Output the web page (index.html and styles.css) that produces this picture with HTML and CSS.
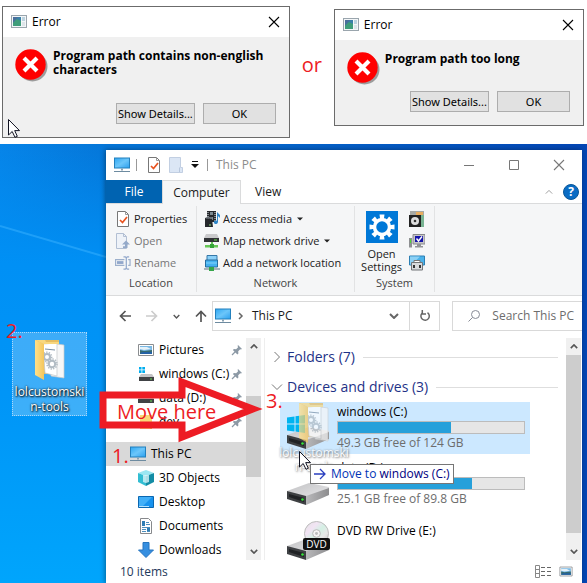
FILE: index.html
```html
<!DOCTYPE html>
<html lang="en">
<head>
<meta charset="utf-8">
<title>Install help</title>
<link rel="stylesheet" href="styles.css">
</head>
<body>
<svg class="defs" aria-hidden="true">
  <defs>
    <linearGradient id="gScreen" x1="0" y1="0" x2="1" y2="1"><stop offset="0" stop-color="#2ea7f2"/><stop offset=".5" stop-color="#6cc6fa"/><stop offset="1" stop-color="#2b9fee"/></linearGradient>
    <linearGradient id="gTop" x1="0" y1="0" x2="1" y2="1"><stop offset="0" stop-color="#c2c2c4"/><stop offset="1" stop-color="#e8e8ea"/></linearGradient>
    <linearGradient id="gSide" x1="0" y1="0" x2="1" y2="0"><stop offset="0" stop-color="#b9b9bb"/><stop offset="1" stop-color="#8d8d8f"/></linearGradient>
    <linearGradient id="gFold" x1="0" y1="0" x2="1" y2="0"><stop offset="0" stop-color="#ffe08a"/><stop offset="1" stop-color="#f4c65c"/></linearGradient>
    <linearGradient id="gDisc" x1="0" y1="0" x2="1" y2="1"><stop offset="0" stop-color="#e2e2e2"/><stop offset=".3" stop-color="#f2e4f4"/><stop offset=".5" stop-color="#d4f0e4"/><stop offset=".7" stop-color="#e8e8e8"/><stop offset="1" stop-color="#bdbdbd"/></linearGradient>
  </defs>
  <symbol id="app" viewBox="0 0 16 14"><rect x=".5" y=".5" width="15" height="12" fill="#f3f6f8" stroke="#9aa5ad"/><rect x="2" y="2" width="8" height="9" fill="#3a7fa8"/><path d="M2 11V7l4-3 4 2v5z" fill="#3f9d7a"/><path d="M2 2h5L2 8z" fill="#4a6f9c"/><rect x="11" y="2" width="3" height="4" fill="#bcd3df"/><rect x="11" y="7" width="3" height="4" fill="#dde5e9"/></symbol>
  <symbol id="error" viewBox="0 0 33 33"><circle cx="17.500" cy="17.500" r="15" fill="#9c9c9c"/><circle cx="15.500" cy="15.500" r="15.200" fill="#f00"/><path d="M9 9l13 13M22 9L9 22" stroke="#fff" stroke-width="4.200"/></symbol>
  <symbol id="cursor" viewBox="0 0 12 19"><path d="M.5 .5V16l3.700-3.500L7 18.300l2.300-1L6.700 11.600h4.800z" fill="#fff" stroke="#111322"/></symbol>
  <symbol id="close" viewBox="0 0 12 12"><path d="M1 1l10 10M11 1L1 11" fill="none" stroke="currentColor" stroke-width="1.100"/></symbol>
  <symbol id="pc" viewBox="0 0 16 16"><rect x=".5" y="1" width="15" height="10" fill="url(#gScreen)" stroke="#2380bd"/><path d="M7 11.500h2v2H7z" fill="#8aa2b3"/><path d="M0 14.500h16" stroke="#6d8ba0"/></symbol>
  <symbol id="check" viewBox="0 0 14 16"><path d="M1.500.5h8l3 3v12h-11z" fill="#fff" stroke="#777"/><path d="M9.500.5v3h3" fill="none" stroke="#999"/><path d="M4 9l2.500 2.500L11 6" fill="none" stroke="#e8531f" stroke-width="1.700"/></symbol>
  <symbol id="newdoc" viewBox="0 0 14 16"><path d="M.5.5h11v10h2v5H.500z" fill="#dbe6f5" stroke="#c2cfe2"/><path d="M10.500 15V10.500" stroke="#b7c6dc"/></symbol>
  <symbol id="open" viewBox="0 0 16 16"><path d="M1.500.5h7l3 3v12h-10z" fill="#eef2f8" stroke="#b2bfd3"/><path d="M8.500.5v3h3" fill="none" stroke="#b2bfd3"/><path d="M11 7.500l4 4h-2.500V15H8v-1.800h2v-1.700H7z" fill="#94a9c9"/></symbol>
  <symbol id="rename" viewBox="0 0 17 16"><path d="M10 4.500H.5v6H10M14 4.500h2v6h-2" fill="none" stroke="#9db0cc" stroke-width="1.300"/><rect x="2" y="6" width="7" height="3" fill="#91a7cb"/><path d="M9 1.500h2l1 1 1-1h2M12 2v12M9 14.500h2l1-1 1 1h2" fill="none" stroke="#91a7cb" stroke-width="1.300"/></symbol>
  <symbol id="media" viewBox="0 0 16 16"><rect x="3" y="0" width="9" height="11" fill="#26282c"/><path d="M4 1v10M11 1v10" stroke="#dce6ec" stroke-dasharray="1 1"/><path d="M6 1h3v3H6zM6 6h3v3H6z" fill="#7d8a92"/><path d="M13 1v9c-1-1-4 0-3 2s4 1 4-1V5l2 2V4z" fill="#2f86c8"/><path d="M1 7l7 1 1 8H1z" fill="#24272b"/><path d="M1 7l2-1h5v2z" fill="#686e75"/><path d="M5 14h2" stroke="#8ee07d"/></symbol>
  <symbol id="mapdrive" viewBox="0 0 16 14"><path d="M2 0h11l2 4H0z" fill="#c9c9cb"/><rect y="4" width="15" height="4" fill="#303235"/><path d="M10 6h3" stroke="#66dd4f"/><path d="M7 8h2v3H7z" fill="#69c65a"/><path d="M1 11h13v2.500H1z" fill="#67c757"/><path d="M6 10h4v4H6z" fill="#35a338"/></symbol>
  <symbol id="netloc" viewBox="0 0 16 16"><path d="M3 .5h10V6H3z" fill="#8bd0f8" stroke="#3678a8"/><path d="M1.500 5h12v7h-12z" fill="#43b1ef" stroke="#266b9d"/><path d="M2 8h11" stroke="#83d2fb"/><path d="M0 14h16" stroke="#a6b3b8" stroke-width="2"/><path d="M5 12h5v4H5z" fill="#36a64b"/></symbol>
  <symbol id="gear" viewBox="0 0 32 32"><path fill="#0078d7" d="M0 0h32v32H0z"/><g fill="#fff"><g id="teeth"><path d="M13.500 3.500h5l-.7 5h-3.600zM13.500 28.500h5l-.7-5h-3.600z"/></g><use href="#teeth" transform="rotate(45 16 16)"/><use href="#teeth" transform="rotate(90 16 16)"/><use href="#teeth" transform="rotate(135 16 16)"/></g><circle cx="16" cy="16" r="7.500" fill="none" stroke="#fff" stroke-width="3.500"/></symbol>
  <symbol id="programs" viewBox="0 0 16 16"><path fill="#a7a9a5" d="M1 0h14v5H1z"/><path fill="#e9ae60" d="M7 1h7v3H7z"/><path fill="#78b392" d="M12 4h3v12h-3z"/><path fill="#222" d="M0 4h12v12H0z"/><circle cx="6" cy="10" r="4" fill="#dedede"/><circle cx="6" cy="10" r="1.300" fill="#333"/></symbol>
  <symbol id="sysprops" viewBox="0 0 16 14"><path fill="#c5c5c7" d="M4 .5h12V10H4z" stroke="#88898c"/><path fill="#1414aa" d="M6 2h8v6H6z"/><path d="M7.500 4.500L9.500 7 13 2.500" fill="none" stroke="#fff" stroke-width="1.400"/><path fill="#929396" d="M8 10h4v2H8zM6 12h8v1.500H6z"/><path fill="#8e9092" d="M0 4h3v9.500H0z"/><path fill="#4edc34" d="M1 5h1v4H1z"/></symbol>
  <symbol id="manage" viewBox="0 0 16 16"><path fill="#4ab2ea" stroke="#2c7fb3" d="M.5 1h15v9H.500z"/><path fill="#8bd0f5" d="M1 1.500h10L3 9.500H1z"/><path fill="#d9dadc" stroke="#737578" d="M2.500 7.500h11V15h-11z"/><path fill="#fff" d="M5 5.500h6v2H5z" stroke="#777"/><path fill="#333" d="M4 10h2v3H4zM10 10h2v3h-2z"/></symbol>
  <symbol id="chevdown" viewBox="0 0 10 6"><path d="M1 1l4 4 4-4" fill="none" stroke="currentColor" stroke-width="2"/></symbol>
  <symbol id="thin" viewBox="0 0 12 8"><path d="M1 1.500l5 5 5-5" fill="none" stroke="currentColor"/></symbol>
  <symbol id="arrow" viewBox="0 0 12 12"><path d="M12 6H1.500M6.500 1l-5 5 5 5" fill="none" stroke="currentColor" stroke-width="1.700"/></symbol>
  <symbol id="caret" viewBox="0 0 6 4"><path d="M0 .5h6L3 3.500z" fill="#222"/></symbol>
  <symbol id="pin" viewBox="0 0 12 12"><path d="M7 1l4 4-1.200.6-.6-.4-2 2.100.2 2.200-1 1L1.900 6l1-1 2.200.2 2-2L6.600 2z" fill="#8c99a5"/><path d="M4.500 7.500L1 11" stroke="#8c99a5" stroke-width="1.200"/></symbol>
  <symbol id="picture" viewBox="0 0 16 16"><path fill="#fff" stroke="#8a8d90" d="M.5 2.500h15v11H.500z"/><path fill="#79b8e4" d="M2 4h12v8H2z"/><path fill="#e4f1f9" d="M2 5h7l4 2-7 1-4-1z"/><path fill="#376b70" d="M2 8l4 1 8-1v4H2z"/><path fill="#2461a6" d="M4 10h10v2H2z"/></symbol>
  <symbol id="windrive" viewBox="0 0 16 16"><path fill="#00adef" d="M1 1h2.500v2.500H1zM4.300 1H7v2.500H4.300zM1 4.300h2.500V7H1zM4.300 4.300H7V7H4.300z"/><path fill="#c4c4c6" d="M3 8h11l2 3H1z"/><path fill="#404245" d="M1 11h15v4H1z"/><path fill="#65dd55" d="M12 12.500h2v1h-2z"/></symbol>
  <symbol id="smalldrive" viewBox="0 0 16 16"><path fill="#c4c4c6" d="M3 5h10l3 4H0z"/><path fill="#404245" d="M0 9h16v4H0z"/><path fill="#65dd55" d="M12 10.500h2v1h-2z"/></symbol>
  <symbol id="smallfolder" viewBox="0 0 16 16"><path fill="#f9d978" d="M2 1h12v14H2z"/><path fill="#edc458" d="M12 8h2v7h-2z"/></symbol>
  <symbol id="cube" viewBox="0 0 16 16"><path fill="#9be7f2" d="M8 0l8 3-8 3-8-3z"/><path fill="#32bdd2" d="M0 3l8 3v10l-8-4z"/><path fill="#138ca5" d="M16 3L8 6v10l8-4z"/><path fill="#e3f8fb" d="M5 5l6 0v7l-3 1-3-1z" opacity=".75"/></symbol>
  <symbol id="desk" viewBox="0 0 16 16"><path fill="#1792ee" stroke="#0a67b1" d="M.5 2.500h15v11H.500z"/><path fill="#41aff8" d="M1 3h13L5 12H1z"/><path stroke="#b7e3ff" d="M1 12.500h10"/></symbol>
  <symbol id="docs" viewBox="0 0 16 16"><path fill="#fff" stroke="#87898c" d="M2.500.5h8l3 3v12h-11z"/><path stroke="#4d8fbe" d="M8 4.500h3M8 6.500h4M4 9.500h8M4 11.500h4M4 13.500h4M9 13.500h3"/><path fill="#307eb5" d="M4 3h3v5H4zM9 10h3v3H9z"/></symbol>
  <symbol id="down" viewBox="0 0 16 16"><path fill="#368fe0" stroke="#2675bf" d="M5 .5h6V8h4.500L8 15.500.5 8H5z"/></symbol>
  <symbol id="folder" viewBox="0 0 32 43">
    <path fill="#e6bd61" d="M1 2h24v34H6z"/><path fill="#f7f7f7" stroke="#c9c9c9" stroke-width=".7" d="M16 5l14 2v33l-13-2z"/><path fill="#fff" stroke="#c2c6c9" stroke-width=".7" d="M9 6l14-1v33l-12-3z"/>
    <path stroke="#55718b" stroke-width=".8" d="M11 11l10 1" fill="none"/><g fill="none" stroke="#b1bbc3" stroke-width="2"><circle cx="13" cy="19" r="3"/><circle cx="18" cy="26" r="3.200"/></g><g fill="none" stroke="#b1bbc3" stroke-dasharray="1.300 1.300" stroke-width="1.500"><circle cx="13" cy="19" r="4.700"/><circle cx="18" cy="26" r="5"/></g>
    <path fill="url(#gFold)" d="M1 2l9 4v36l-9-5z"/><path fill="#f8d77f" d="M1 2h10l1 2h13v2H10z"/></symbol>
  <symbol id="drive" viewBox="0 0 43 22"><path fill="url(#gTop)" d="M0 8L22 0l20 4v8L19 16z"/><path fill="url(#gSide)" d="M19 13l23-8v7L19 22z"/><path fill="#3e4043" d="M0 8l19 5v9L0 16z"/><path fill="#202225" d="M2 11l15 4v4L2 14z"/><circle cx="15.500" cy="16.500" r="1.300" fill="#38e83c"/></symbol>
  <symbol id="winlogo" viewBox="0 0 18 18"><path fill="#00b4f0" d="M0 2.500L7.500 1.500V8.500H0zM8.500 1.300L18 0v8.500H8.500zM0 9.500h7.500v7L0 15.500zM8.500 9.500H18V18l-9.500-1.400z"/></symbol>
  <symbol id="disc" viewBox="0 0 26 26"><circle cx="13" cy="13" r="12.500" fill="url(#gDisc)" stroke="#b9b9b9"/><circle cx="13" cy="13" r="4" fill="#f5f5f5" stroke="#b5b5b5"/><circle cx="13" cy="13" r="1.500" fill="#bbb"/></symbol>
</svg>

<header class="errors">
  <section class="dialog dialog-first">
    <div class="dialog-title"><svg class="app"><use href="#app"/></svg><span>Error</span><button class="plain" aria-label="Close"><svg class="x"><use href="#close"/></svg></button></div>
    <div class="dialog-body">
      <svg class="err"><use href="#error"/></svg><p>Program path contains non-english characters</p>
    </div>
    <div class="dialog-actions"><button>Show Details...</button><button>OK</button></div>
    <svg class="cursor dialog-cursor"><use href="#cursor"/></svg>
  </section>
  <span class="or hand">or</span>
  <section class="dialog dialog-second">
    <div class="dialog-title"><svg class="app"><use href="#app"/></svg><span>Error</span><button class="plain" aria-label="Close"><svg class="x"><use href="#close"/></svg></button></div>
    <div class="dialog-body">
      <svg class="err"><use href="#error"/></svg><p>Program path too long</p>
    </div>
    <div class="dialog-actions"><button>Show Details...</button><button>OK</button></div>
  </section>
</header>

<main class="desktop">
  <svg class="beam" viewBox="0 0 106 34" aria-hidden="true"><path d="M0 2l106 31" stroke="#36b0ff" stroke-width="2" opacity=".55"/></svg>
  <div class="shortcut"><svg class="folder"><use href="#folder"/></svg><span>lolcustomski<br>n-tools</span></div>

  <section class="window">
    <div class="titlebar">
      <svg class="i16"><use href="#pc"/></svg><i class="bar"></i><svg class="i14"><use href="#check"/></svg><svg class="i14"><use href="#newdoc"/></svg>
      <svg class="qat" viewBox="0 0 8 8"><path d="M1 .5h6" stroke="#111"/><path d="M0 3h8L4 7z" fill="#111"/></svg><i class="bar"></i><span class="caption">This PC</span>
      <div class="controls">
        <button class="plain" aria-label="Minimize"><svg viewBox="0 0 12 12"><path d="M1 6.500h10" stroke="#777"/></svg></button>
        <button class="plain" aria-label="Maximize"><svg viewBox="0 0 12 12"><path d="M1.500 1.500h9v9h-9z" fill="none" stroke="#777"/></svg></button>
        <button class="plain" aria-label="Close"><svg><use href="#close"/></svg></button>
      </div>
    </div>
    <nav class="tabs">
      <button class="tab file">File</button><button class="tab active">Computer</button><button class="tab">View</button>
      <div class="tabs-end"><button class="plain" aria-label="Collapse ribbon"><svg class="collapse" viewBox="0 0 10 6"><path d="M1 5l4-4 4 4" fill="none" stroke="#888"/></svg></button><button class="help" aria-label="Help">?</button></div>
    </nav>
    <div class="ribbon">
      <div class="group location">
        <div class="cmds">
          <button><svg><use href="#check"/></svg>Properties</button>
          <button disabled><svg><use href="#open"/></svg>Open</button>
          <button disabled><svg><use href="#rename"/></svg>Rename</button>
        </div>
        <div class="label">Location</div>
      </div>
      <div class="group network">
        <div class="cmds">
          <button><svg><use href="#media"/></svg>Access media<svg class="caret"><use href="#caret"/></svg></button>
          <button><svg><use href="#mapdrive"/></svg>Map network drive<svg class="caret"><use href="#caret"/></svg></button>
          <button><svg><use href="#netloc"/></svg>Add a network location</button>
        </div>
        <div class="label">Network</div>
      </div>
      <div class="group system">
        <div class="syscmds">
          <button class="settings"><svg><use href="#gear"/></svg>Open<br>Settings</button>
          <div class="minis">
            <button class="plain" aria-label="Uninstall or change a program"><svg><use href="#programs"/></svg></button>
            <button class="plain" aria-label="System properties"><svg><use href="#sysprops"/></svg></button>
            <button class="plain" aria-label="Manage"><svg><use href="#manage"/></svg></button>
          </div>
        </div>
        <div class="label">System</div>
      </div>
    </div>
    <div class="address">
      <div class="history">
        <button class="plain" aria-label="Back"><svg class="arr"><use href="#arrow"/></svg></button>
        <button class="plain faded" aria-label="Forward"><svg class="arr flip"><use href="#arrow"/></svg></button>
        <button class="plain recent" aria-label="Recent locations"><svg><use href="#chevdown"/></svg></button>
        <button class="plain" aria-label="Up"><svg class="arr up"><use href="#arrow"/></svg></button>
      </div>
      <div class="path"><svg class="i16"><use href="#pc"/></svg><svg class="sep" viewBox="0 0 5 8"><path d="M1 1l3 3-3 3" fill="none" stroke="#666" stroke-width="1.500"/></svg><span>This PC</span><button class="plain drop" aria-label="Previous locations"><svg><use href="#chevdown"/></svg></button><button class="plain refresh" aria-label="Refresh"><svg viewBox="0 0 12 12"><path d="M3 3.200A4.200 4.200 0 1 0 8.500 2.600M3.300 0v4H7" fill="none" stroke="#666" stroke-width="1.500"/></svg></button></div>
      <label class="search"><svg viewBox="0 0 12 12"><circle cx="7.500" cy="4.500" r="4" fill="none" stroke="#888b96"/><path d="M4.500 7.500L.5 11.500" stroke="#888b96"/></svg><input type="text" placeholder="Search This PC" aria-label="Search This PC"></label>
    </div>
    <div class="content">
      <nav class="tree">
        <a href="#"><svg><use href="#picture"/></svg><span>Pictures</span><svg class="pin"><use href="#pin"/></svg></a>
        <a href="#"><svg><use href="#windrive"/></svg><span>windows (C:)</span><svg class="pin"><use href="#pin"/></svg></a>
        <a href="#"><svg><use href="#smalldrive"/></svg><span>data (D:)</span><svg class="pin"><use href="#pin"/></svg></a>
        <a href="#"><svg><use href="#smallfolder"/></svg><span>dev</span><svg class="pin"><use href="#pin"/></svg></a>
        <a href="#" class="current"><svg><use href="#pc"/></svg><span>This PC</span></a>
        <a href="#"><svg><use href="#cube"/></svg><span>3D Objects</span></a>
        <a href="#"><svg><use href="#desk"/></svg><span>Desktop</span></a>
        <a href="#"><svg><use href="#docs"/></svg><span>Documents</span></a>
        <a href="#"><svg><use href="#down"/></svg><span>Downloads</span></a>
      </nav>
      <div class="scroll tree-scroll"><svg class="rot"><use href="#chevdown"/></svg><i></i><svg><use href="#chevdown"/></svg></div>
      <div class="files">
        <h2 class="closed"><svg><use href="#thin"/></svg>Folders (7)</h2>
        <h2><svg><use href="#thin"/></svg>Devices and drives (3)</h2>
        <article class="disk target"><div class="pic"><svg class="drv"><use href="#drive"/></svg><svg class="logo"><use href="#winlogo"/></svg></div><div class="info"><b>windows (C:)</b><div class="meter"><i style="width:61%"></i></div><small>49.3 GB free of 124 GB</small></div></article>
        <article class="disk"><div class="pic"><svg class="drv"><use href="#drive"/></svg></div><div class="info"><b>data (D:)</b><div class="meter"><i style="width:72%"></i></div><small>25.1 GB free of 89.8 GB</small></div></article>
        <article class="disk dvd"><div class="pic"><svg class="drv"><use href="#drive"/></svg><svg class="disc"><use href="#disc"/></svg><span class="badge">DVD</span></div><div class="info"><b>DVD RW Drive (E:)</b></div></article>
      </div>
      <div class="scroll files-scroll"><svg class="rot"><use href="#chevdown"/></svg><i></i><svg><use href="#chevdown"/></svg></div>
    </div>
    <footer class="status"><span>10 items</span><div class="views"><button class="plain" aria-label="Details"><svg viewBox="0 0 16 13"><path d="M.5.5h4v12h-4zM.5 4.500h4M.5 8.500h4" fill="none" stroke="#888"/><path d="M6 2.500h4M12 2.500h4M6 6.500h4M12 6.500h4M6 10.500h4M12 10.500h4" stroke="#666"/></svg></button><button class="plain" aria-label="Large icons"><svg><use href="#picture"/></svg></button></div></footer>
  </section>

  <div class="ghost"><svg class="folder"><use href="#folder"/></svg><span>lolcustomski<br>n-tools</span></div>
  <div class="tip"><svg viewBox="0 0 14 12"><path d="M1 6h11M7 1l5 5-5 5" fill="none" stroke="#2a3fc0" stroke-width="1.300"/></svg><span>Move to <em>windows (C:)</em></span></div>
  <svg class="cursor drag-cursor"><use href="#cursor"/></svg>
  <svg class="bigarrow" viewBox="0 0 166 70" aria-hidden="true"><path d="M5 20H84V7L155 34 84 62V50H5z" fill="none" stroke="#ed1c24" stroke-width="7"/></svg>
  <span class="hand move">Move here</span>
  <span class="hand step one">1.</span><span class="hand step two">2.</span><span class="hand step three">3.</span>
</main>
</body>
</html>
```
FILE: styles.css
```css
* { box-sizing: border-box; }
body { margin: 0; min-height: 100vh; display: flex; flex-direction: column; background: #fff; color: #1a1a1a; font: 12px/16px "Segoe UI", "Open Sans", "Noto Sans", sans-serif; overflow: hidden; }
svg { display: block; flex: none; overflow: visible; }
button { font: inherit; color: inherit; }
.defs { position: absolute; width: 0; height: 0; }
.plain { border: 0; padding: 0; background: none; display: flex; align-items: center; justify-content: center; }
.i16 { width: 16px; height: 16px; }
.i14 { width: 14px; height: 16px; }
.hand { font-family: "Comic Sans MS", "Open Sans", sans-serif; font-weight: 500; color: #ed1c24; }
.cursor { width: 12px; height: 19px; }

.errors { height: 144px; display: flex; align-items: flex-start; padding: 6px 3px 0 2px; }
.dialog { position: relative; border: 1px solid #6b6b6b; background: #f0f0f0; font-family: Tahoma, "Noto Sans", sans-serif; font-size: 11px; color: #000; }
.dialog-first { flex: 288 1 0; height: 132px; }
.dialog-second { flex: 250 1 0; height: 117px; margin-top: 3px; }
.dialog-title { height: 30px; background: #fff; display: flex; align-items: center; padding: 0 9px 0 8px; font-size: 12px; font-family: "Segoe UI", "Open Sans", sans-serif; }
.dialog-title span { flex: 1; margin-left: 5px; }
.app { width: 16px; height: 14px; }
.x { width: 12px; height: 12px; }
.dialog-body { display: flex; gap: 5px; padding: 12px 16px 0 12px; }
.dialog-second .dialog-body { height: 51px; }
.dialog-first .dialog-body { height: 66px; }
.err { width: 33px; height: 33px; }
.dialog p { margin: 0; font: bold 12px/14px Tahoma, "Open Sans", sans-serif; }
.dialog-second .dialog-body { padding-right: 0; }
.dialog-actions { display: flex; justify-content: flex-end; gap: 8px; padding-right: 13px; }
.dialog-actions button { height: 21px; padding: 0; background: #e1e1e1; border: 1px solid #adadad; flex: 0 1 73px; line-height: 16px; white-space: nowrap; }
.dialog-actions button:first-child { flex-basis: 79px; }
.dialog-cursor { position: absolute; left: 5px; bottom: -1px; }
.or { flex: 0 0 44px; text-align: center; font-size: 20px; line-height: 24px; margin-top: 47px; }

.desktop { position: relative; flex: 1; min-height: 439px; display: flex; padding: 6px 5px 0 0; background: linear-gradient(90deg, #0684e8 0, #0576d8 106px, #0446b4 587px); }
.desktop::before { content: ""; position: absolute; left: 0; top: 0; bottom: 0; width: 106px; background: linear-gradient(180deg, #047fe300 0, #0090f5 120px, #0095f7 250px, #00a5fc 439px); }
.beam { position: absolute; left: 0; top: 80px; width: 106px; height: 34px; }
.shortcut { position: relative; align-self: flex-start; flex: none; width: 75px; height: 84px; margin: 182px 19px 0 12px; border: 1px dotted #a9d8fb; background: #ffffff3d; display: flex; flex-direction: column; align-items: center; padding-top: 5px; color: #fff; text-align: center; line-height: 15px; text-shadow: 1px 1px 2px #000, 0 0 2px #000; }
.folder { width: 32px; height: 43px; }
.shortcut span { white-space: nowrap; margin-top: 3px; }

.window { position: relative; flex: 1; min-width: 0; background: #fff; display: flex; flex-direction: column; box-shadow: -1px 0 5px #0006; }
.titlebar { height: 30px; display: flex; align-items: center; padding-left: 8px; gap: 8px; }
.bar { width: 1px; height: 12px; background: #999; }
.titlebar .i16 + .bar { margin-right: 2px; margin-left: -2px; }
.qat { width: 8px; height: 8px; }
.caption { color: #8c8c8c; }
.controls { margin: 0 1px 0 auto; display: flex; }
.controls button { width: 45px; height: 28px; color: #777; }
.controls svg { width: 12px; height: 12px; }
.tabs { height: 24px; display: flex; border-bottom: 1px solid #dadbdc; }
.tab { border: 0; background: none; padding: 0 14px; height: 23px; }
.tab.file { background: #0063b1; color: #fff; width: 56px; }
.tab.active { width: 79px; padding: 0; height: 24px; background: #f5f6f7; border: 1px solid #dadbdc; border-bottom: 0; }
.tabs-end { margin-left: auto; display: flex; align-items: center; gap: 10px; padding-right: 3px; }
.collapse { width: 8px; height: 6px; }
.help { width: 16px; height: 16px; padding: 0; border: 1px solid #0a5798; border-radius: 50%; background: #0a6cc4; color: #fff; font-weight: bold; line-height: 14px; }
.ribbon { height: 92px; display: flex; padding: 2px 0 3px; background: #f5f6f7; border-bottom: 1px solid #dadbdc; font-size: 11px; }
.group { display: flex; flex-direction: column; justify-content: space-between; border-right: 1px solid #e2e3e4; }
.location { width: 91px; padding-left: 9px; }
.network { width: 158px; padding-left: 7px; }
.system { width: 80px; }
.cmds { display: flex; flex-direction: column; padding-top: 2px; }
.cmds button { height: 22px; border: 0; background: none; padding: 0; display: flex; align-items: center; gap: 3px; white-space: nowrap; }
.cmds button:disabled { color: #777; }
.cmds svg { width: 16px; height: 16px; }
.cmds .caret { width: 6px; height: 4px; margin-left: 2px; }
.label { text-align: center; color: #444; line-height: 18px; }
.location .label { margin-left: -9px; }
.network .label { margin-left: -7px; }
.syscmds { display: flex; padding: 5px 0 0 5px; }
.settings { width: 43px; border: 0; background: none; padding: 0; display: flex; flex-direction: column; align-items: center; line-height: 13px; text-align: center; }
.settings svg { width: 32px; height: 32px; margin-bottom: 4px; }
.minis { display: flex; flex-direction: column; gap: 6px; margin-left: 6px; }
.minis svg { width: 16px; height: 16px; }
.address { height: 42px; display: flex; padding: 5px 0 7px 13px; }
.history { width: 93px; flex: none; display: flex; align-items: center; gap: 15px; color: #555; }
.arr { width: 12px; height: 12px; }
.flip { transform: scaleX(-1); }
.up { transform: rotate(90deg); }
.faded { color: #ccc; }
.history .recent svg { width: 7px; height: 5px; }
.path { flex: 225 1 0; display: flex; align-items: center; border: 1px solid #d9d9d9; padding-left: 2px; }
.sep { width: 5px; height: 8px; margin: 0 9px 0 7px; }
.drop { margin-left: auto; width: 30px; height: 28px; color: #666; }
.drop svg { width: 10px; height: 6px; }
.refresh { width: 30px; height: 28px; border-left: 1px solid #d9d9d9; }
.refresh svg { width: 12px; height: 12px; }
.search { flex: 114 1 0; min-width: 0; margin-left: 12px; display: flex; align-items: center; gap: 12px; padding-left: 15px; border: 1px solid #d9d9d9; border-right: 0; }
.search svg { width: 12px; height: 12px; }
.search input { min-width: 0; width: 100%; border: 0; padding: 0; outline: 0; font: inherit; }
.search input::placeholder { color: #6d6d6d; opacity: 1; }
.content { flex: 1 1 0; min-height: 0; display: flex; overflow: hidden; padding-right: 1px; }
.tree { width: 140px; display: flex; flex-direction: column; flex: none; }
.tree a { height: 24px; flex: none; display: flex; align-items: center; padding: 0 3px 0 32px; gap: 5px; color: #000; text-decoration: none; white-space: nowrap; }
.tree a svg { width: 16px; height: 16px; }
.tree a span { flex: 1; }
.tree a .pin { width: 12px; height: 12px; margin-left: -5px; }
.tree .current { margin-top: 8px; padding-left: 24px; background: #d9d9d9; }
.scroll { width: 15px; flex: none; background: #f0f0f0; display: flex; flex-direction: column; align-items: center; color: #555; padding: 6px 0; }
.scroll svg { width: 8px; height: 5px; }
.rot { transform: rotate(180deg); }
.scroll i { width: 100%; background: #cdcdcd; }
.tree-scroll i { height: 81px; margin-top: 47px; margin-bottom: auto; }
.files-scroll i { flex: 1; margin: 6px 0 16px; }
.files { flex: 1; min-width: 0; margin-left: 3px; border-left: 1px solid #eee; padding: 4px 8px 0 6px; }
h2 { margin: 0; height: 30px; display: flex; align-items: center; gap: 4px; font-size: 14px; font-weight: 400; color: #1e3287; white-space: nowrap; }
h2::after { content: ""; flex: 1; height: 1px; background: #dedede; margin-left: 4px; }
h2 svg { width: 12px; height: 8px; color: #777; }
h2.closed svg { transform: rotate(-90deg); }
.disk { width: 250px; max-width: 100%; height: 52px; margin: 0 0 4px 9px; padding: 2px 5px 0 7px; display: flex; gap: 8px; }
.disk.target { background: #cce8ff; }
.pic { position: relative; width: 42px; flex: none; }
.drv { position: absolute; left: 0; top: 23px; width: 43px; height: 22px; }
.logo { position: absolute; left: 0; top: 11px; width: 18px; height: 18px; }
.info { flex: 1; min-width: 0; color: #000; }
.info b { display: block; font-weight: 400; height: 17px; }
.meter { height: 13px; border: 1px solid #bcbcbc; background: #e6e6e6; }
.meter i { display: block; height: 100%; background: #26a0da; }
.info small { display: block; font-size: 12px; color: #6d6d6d; line-height: 18px; }
.dvd { padding-top: 9px; }
.disc { position: absolute; left: 17px; top: -2px; width: 25px; height: 25px; }
.dvd .drv { top: 15px; }
.badge { position: absolute; left: 16px; top: 15px; width: 27px; height: 12px; border-radius: 2px; background: #111; color: #fff; font-size: 10px; line-height: 12px; text-align: center; }
.status { height: 23px; flex: none; display: flex; justify-content: space-between; align-items: center; padding: 0 8px 0 14px; color: #1e395b; }
.views { display: flex; gap: 7px; }
.views svg { width: 16px; height: 13px; }

.ghost { position: absolute; left: 280px; top: 255px; width: 68px; display: flex; flex-direction: column; align-items: center; color: #fff; text-align: center; line-height: 14px; text-shadow: 1px 1px 2px #555, 0 0 2px #888; opacity: .7; white-space: nowrap; }
.ghost .folder { height: 47px; }
.tip { position: absolute; left: 310px; top: 320px; height: 20px; display: flex; align-items: center; gap: 4px; padding: 0 3px 0 2px; background: #fff; border: 1px solid #767676; color: #0033b5; white-space: nowrap; }
.tip svg { width: 14px; height: 12px; }
.tip em { font-style: normal; color: #000080; }
.drag-cursor { position: absolute; left: 299px; top: 307px; }
.bigarrow { position: absolute; left: 98px; top: 231px; width: 166px; height: 70px; }
.move { position: absolute; left: 117px; top: 256px; font-size: 20px; line-height: 24px; white-space: nowrap; }
.step { position: absolute; font-size: 20px; line-height: 22px; }
.one { left: 112px; top: 301px; }
.two { left: 6px; top: 176px; }
.three { left: 266px; top: 246px; }
```
